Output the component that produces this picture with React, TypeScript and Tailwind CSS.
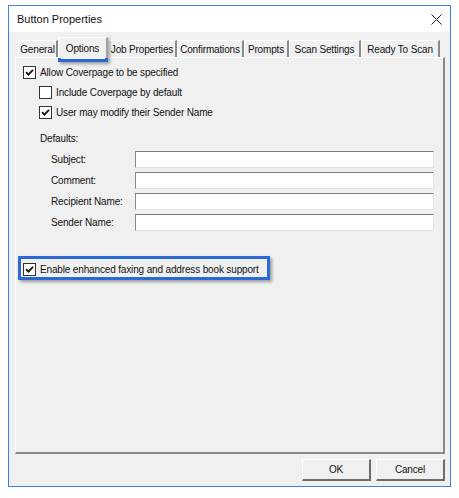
import type { ReactNode } from 'react'

const font = { fontFamily: '"Liberation Sans", Arial, sans-serif' }

const tabs = [
  { label: 'General', w: 'w-[40px]' },
  { label: 'Options', w: 'w-[50px]', active: true },
  { label: 'Job Properties', w: 'w-[69px]' },
  { label: 'Confirmations', w: 'w-[67px]' },
  { label: 'Prompts', w: 'w-[45px]' },
  { label: 'Scan Settings', w: 'w-[72px]' },
  { label: 'Ready To Scan', w: 'w-[79px]' },
]

const fields = ['Subject:', 'Comment:', 'Recipient Name:', 'Sender Name:']

function Checkbox({ checked }: { checked?: boolean }) {
  return (
    <span className="flex h-[13px] w-[13px] shrink-0 items-center justify-center border border-[#333333] bg-white">
      {checked && (
        <svg width="9" height="9" viewBox="0 0 9 9">
          <path d="M1 4.2 L3.4 6.6 L8 1.8" fill="none" stroke="#111" strokeWidth="1.8" />
        </svg>
      )}
    </span>
  )
}

function CheckRow({ checked, indent, children }: { checked?: boolean; indent?: boolean; children: ReactNode }) {
  return (
    <div className={`flex h-[20px] items-center gap-[4px] ${indent ? 'pl-[23px]' : 'pl-[7px]'}`}>
      <Checkbox checked={checked} />
      <span>{children}</span>
    </div>
  )
}

export default function App() {
  return (
    <div className="relative h-[498px] w-[459px] bg-white text-[10px] tracking-[-0.15px] text-[#111]" style={font}>
      <div className="ml-[8px] pt-[5px]">
        <div className="flex h-[482px] w-[443px] flex-col border border-[#3a84e0] bg-[#f0f0f0]">
          {/* title bar */}
          <div className="flex h-[26px] items-center justify-between bg-white pl-[8px] pr-[8px]">
            <span className="text-[11px] tracking-normal text-[#111]">Button Properties</span>
            <svg width="11" height="11" viewBox="0 0 11 11">
              <path d="M0.5 0.5 L10.5 10.5 M10.5 0.5 L0.5 10.5" stroke="#222" strokeWidth="1" />
            </svg>
          </div>

          {/* tabs */}
          <div className="flex h-[25px] items-end pl-[9px] pr-[5px]">
            {tabs.map(t =>
              t.active ? (
                <div
                  key={t.label}
                  className={`relative z-10 -mb-px flex h-[21px] ${t.w} items-start justify-center border-l border-t border-white border-r-2 border-r-[#a0a0a0] bg-[#f0f0f0] pt-[3px]`}
                >
                  {t.label}
                </div>
              ) : (
                <div
                  key={t.label}
                  className={`flex h-[17px] ${t.w} items-center justify-center border-l border-t border-white border-r-2 border-r-[#8a8a8a] bg-[#f0f0f0]`}
                >
                  {t.label}
                </div>
              )
            )}
          </div>

          {/* panel */}
          <div className="ml-[6px] mr-[5px] flex h-[397px] flex-col border-l border-t border-white border-r-2 border-b-2 border-r-[#8a8a8a] border-b-[#8a8a8a] pt-[4px]">
            <CheckRow checked>Allow Coverpage to be specified</CheckRow>
            <CheckRow indent>Include Coverpage by default</CheckRow>
            <CheckRow checked indent>User may modify their Sender Name</CheckRow>
            <div className="mt-[6px] flex h-[20px] items-center pl-[24px]">Defaults:</div>
            <div className="mt-[3px] flex flex-col gap-[4px]">
              {fields.map(f => (
                <div key={f} className="flex h-[17px] items-center">
                  <span className="w-[119px] shrink-0 pl-[35px]">{f}</span>
                  <div className="h-[17px] w-[299px] border-l border-t border-l-[#8a8a8a] border-t-[#7a7a7a] border-r border-b border-r-[#e3e3e3] border-b-[#e3e3e3] bg-white" />
                </div>
              ))}
            </div>
            <div className="mt-[28px]">
              <CheckRow checked>Enable enhanced faxing and address book support</CheckRow>
            </div>
          </div>

          {/* buttons */}
          <div className="mt-[5px] flex justify-end gap-[5px] pr-[5px]">
            <button className="h-[22px] w-[69px] border-l border-t border-white border-r-2 border-b-2 border-r-[#6d6d6d] border-b-[#6d6d6d] bg-[#f0f0f0] text-[10px]">
              OK
            </button>
            <button className="h-[22px] w-[69px] border-l border-t border-white border-r-2 border-b-2 border-r-[#6d6d6d] border-b-[#6d6d6d] bg-[#f0f0f0] text-[10px]">
              Cancel
            </button>
          </div>
        </div>
      </div>

      {/* annotation highlights */}
      <div className="absolute left-[58px] top-[37px] h-[25px] w-[50px] border-[3px] border-[#2a6ad3] shadow-[2px_2px_3px_rgba(0,0,0,0.35)]" />
      <div className="absolute left-[18px] top-[256px] h-[24px] w-[252px] border-[3px] border-[#2a6ad3] shadow-[2px_2px_3px_rgba(0,0,0,0.35)]" />
    </div>
  )
}
